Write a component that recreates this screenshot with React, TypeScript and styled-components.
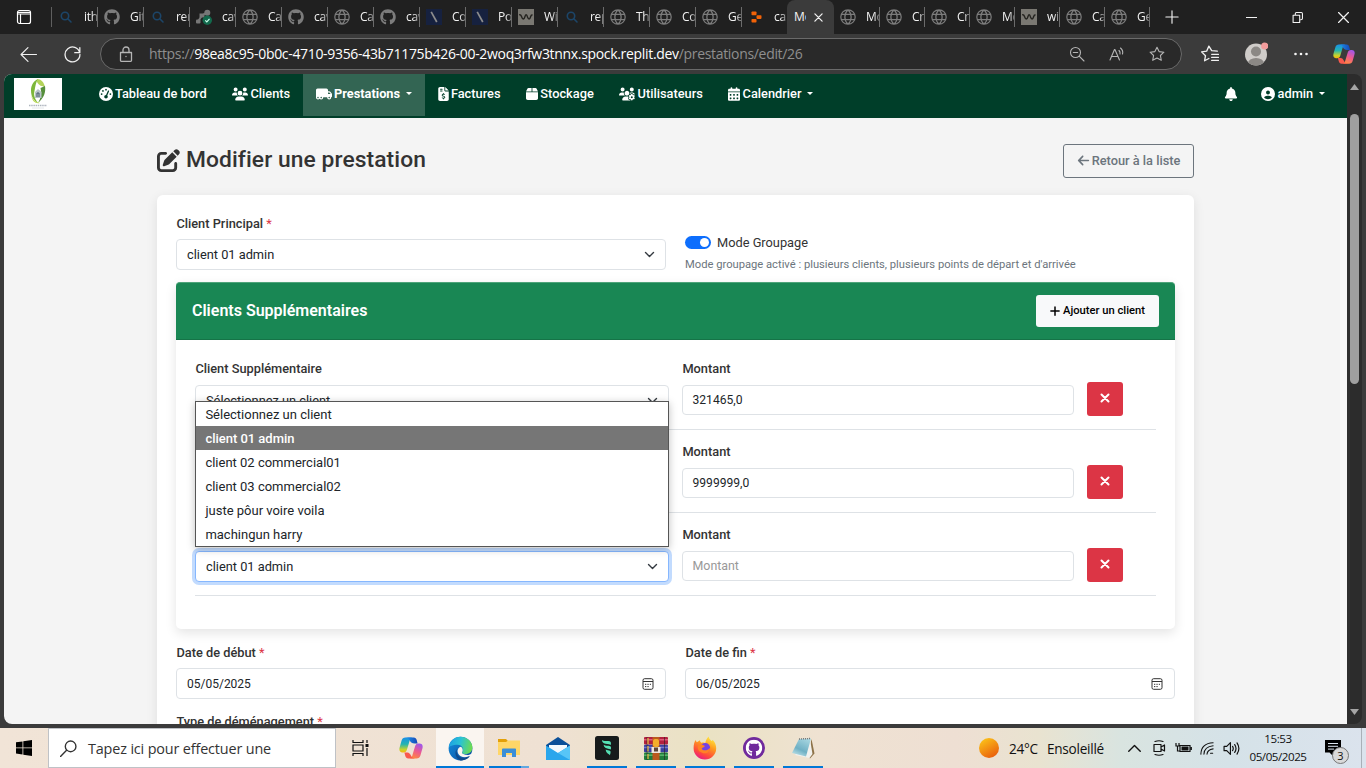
import React from "react";
import styled, { createGlobalStyle, css } from "styled-components";
import {
  FaGaugeHigh,
  FaUsers,
  FaTruckMoving,
  FaFileInvoiceDollar,
  FaBox,
  FaUsersGear,
  FaCalendarDays,
  FaBell,
  FaCircleUser,
  FaPenToSquare,
  FaArrowLeft,
  FaPlus,
  FaGithub,
} from "react-icons/fa6";

const GlobalStyle = createGlobalStyle`
  *, *::before, *::after { box-sizing: border-box; }
  body { margin: 0; background: #3b3b3b; overflow: hidden; }
  svg { display: block; flex: none; }
`;

const ui = `"Open Sans", "Noto Sans", sans-serif`;

const Desktop = styled.div`
  width: 1366px;
  height: 768px;
  display: flex;
  flex-direction: column;
  overflow: hidden;
  background: #3b3b3b;
  font-family: Roboto, sans-serif;
  color: #212529;
`;

/* ---------- browser chrome ---------- */

const TabStrip = styled.div`
  height: 34px;
  flex: none;
  display: flex;
  align-items: stretch;
  background: #202020;
  font: 12px/34px ${ui};
  color: #f2f2f2;
`;

const TabActions = styled.div`
  width: 52px;
  display: flex;
  align-items: center;
  padding-left: 16px;
  border-right: 1px solid transparent;
  background: linear-gradient(#5f5f5f, #5f5f5f) no-repeat 51px 7px / 1px 20px;
`;

const Tab = styled.div<{ $w: number; $line?: boolean }>`
  width: ${(p) => p.$w}px;
  flex: none;
  display: flex;
  align-items: center;
  padding-left: 6px;
  ${(p) =>
    p.$line !== false &&
    css`
      background: linear-gradient(#6b6b6b, #6b6b6b) no-repeat right 7px / 1px 20px;
    `}
`;

const TabIcon = styled.div`
  width: 16px;
  height: 16px;
  flex: none;
  margin-right: 10px;
  color: #7c7c7c;
`;

const TabTitle = styled.span`
  flex: 1;
  overflow: hidden;
  white-space: nowrap;
  letter-spacing: -0.3px;
  margin-right: 1px;
  mask-image: linear-gradient(90deg, #000 60%, rgba(0, 0, 0, 0.4));
`;

const ActiveTab = styled.div`
  width: 47px;
  flex: none;
  display: flex;
  align-items: center;
  justify-content: space-between;
  padding: 0 11px 0 7px;
  background: #3b3b3b;
  border-radius: 8px 8px 0 0;
`;

const ActiveTitle = styled.span`
  width: 12px;
  overflow: hidden;
  white-space: nowrap;
`;

const NewTab = styled.div`
  display: flex;
  align-items: center;
  margin-left: 15px;
`;

const WindowButtons = styled.div`
  margin-left: auto;
  display: flex;
  align-items: center;
  gap: 35px;
  padding-right: 17px;
`;

const Toolbar = styled.div`
  height: 40px;
  flex: none;
  display: flex;
  align-items: center;
  padding-left: 20px;
  color: #f0f0f0;
`;

const NavButtons = styled.div`
  width: 80px;
  flex: none;
  display: flex;
  gap: 27px;
`;

const AddressBar = styled.div`
  width: 1082px;
  height: 32px;
  flex: none;
  display: flex;
  align-items: center;
  border: 1px solid #6a6a6a;
  border-radius: 16px;
  background: #292929;
  padding: 0 16px 0 17px;
  color: #b5b5b5;
`;

const Url = styled.div`
  flex: 1;
  margin-left: 15px;
  white-space: nowrap;
  font: 14px/28px ${ui};
  letter-spacing: -0.32px;
  color: #8f8f8f;
`;

const Host = styled.span`
  color: #fff;
`;

const AddressTools = styled.div`
  display: flex;
  gap: 24px;
  align-items: center;
`;

const ToolbarEnd = styled.div`
  display: flex;
  align-items: center;
  gap: 25px;
  margin-left: 19px;
`;

const Viewport = styled.div`
  height: 650px;
  flex: none;
  margin: 0 4px 4px;
  display: flex;
  border-radius: 8px;
  overflow: hidden;
  background: #2c2c2c;
`;

const Page = styled.div`
  width: 1343px;
  height: 650px;
  overflow: hidden;
  background: #f4f4f4;
`;

const ScrollBar = styled.div`
  width: 15px;
  display: flex;
  flex-direction: column;
  align-items: center;
  padding: 10px 0 9px;
`;

const ScrollThumb = styled.div`
  width: 9px;
  height: 270px;
  margin: 24px 0 auto;
  border-radius: 5px;
  background: #9f9f9f;
`;

/* ---------- application navbar ---------- */

const Navbar = styled.nav`
  height: 44px;
  display: flex;
  align-items: flex-start;
  background: #003e29;
  color: #fff;
  padding-left: 10px;
`;

const Brand = styled.div`
  width: 48px;
  height: 32px;
  margin: 4px 24px 0 0;
  background: #fff;
`;

const NavItem = styled.a<{ $active?: boolean; $tight?: boolean }>`
  height: 42px;
  display: flex;
  align-items: center;
  padding: 0 ${(p) => (p.$tight ? 8 : 12.8)}px 3px 12.8px;
  font-size: 12.8px;
  font-weight: ${(p) => (p.$active ? 700 : 500)};
  white-space: nowrap;
  background: ${(p) => (p.$active ? "#336553" : "transparent")};
  svg {
    margin-right: 2.2px;
  }
`;

const AccountItem = styled(NavItem)`
  svg {
    margin-right: 3px;
  }
`;

const Caret = styled.span`
  margin-left: 6px;
  border: 3.8px solid transparent;
  border-top-color: currentColor;
  border-bottom: 0;
`;

const NavEnd = styled.div`
  display: flex;
  margin-left: auto;
  padding-right: 9px;
`;

/* ---------- page content ---------- */

const Container = styled.main`
  width: 1037px;
  margin-left: 153px;
  padding-top: 26px;
`;

const PageHead = styled.header`
  height: 34px;
  display: flex;
  justify-content: space-between;
  margin-bottom: 17px;
`;

const Title = styled.h1`
  margin: 0;
  display: flex;
  align-items: center;
  gap: 6px;
  height: 32px;
  font-size: 22.8px;
  font-weight: 500;
  line-height: 34px;
  color: #333;
  letter-spacing: 0.08px;
`;

const OutlineButton = styled.button`
  width: 131px;
  height: 34px;
  display: flex;
  align-items: center;
  justify-content: center;
  gap: 2px;
  padding: 0 0 1px;
  border: 1px solid #6c757d;
  border-radius: 3px;
  background: transparent;
  color: #6c757d;
  font: 500 12.8px Roboto, sans-serif;
  white-space: nowrap;
`;

const Card = styled.section`
  height: 620px;
  padding: 19px 19px 0;
  border-radius: 6px;
  background: #fff;
  box-shadow: 0 3px 12px rgba(0, 0, 0, 0.09);
`;

const TwoColumns = styled.div`
  height: 56px;
  display: grid;
  grid-template-columns: 490px 490px;
  column-gap: 19px;
`;

const Label = styled.label`
  display: block;
  height: 18px;
  padding-left: 0.4px;
  font-size: 12.8px;
  font-weight: 500;
  line-height: 20px;
  color: #333;
`;

const Required = styled.span`
  color: #dc3545;
  font-weight: 400;
`;

const Field = styled.div<{ $gap?: number; $h?: number; $focus?: boolean; $muted?: boolean; $small?: boolean }>`
  height: ${(p) => p.$h ?? 30}px;
  margin-top: ${(p) => p.$gap ?? 8}px;
  display: flex;
  align-items: center;
  justify-content: space-between;
  padding: 0 10px;
  border: 1px solid ${(p) => (p.$focus ? "#86b7fe" : "#dee2e6")};
  border-radius: 4px;
  background: #fff;
  font-size: ${(p) => (p.$small ? 12 : 12.8)}px;
  color: ${(p) => (p.$muted ? "#999" : "#212529")};
  ${(p) =>
    p.$focus &&
    css`
      box-shadow: 0 0 0 3px #c2dbfe;
    `}
`;

const AmountField = styled(Field)`
  padding: 0 9.5px ${(p) => (p.$muted ? 1 : 0)}px;
  font-size: ${(p) => (p.$muted ? 12.4 : 12.1)}px;
`;

const DateField = styled(Field)`
  padding-right: 11.5px;
`;

const ModeColumn = styled.div`
  padding-top: 18px;
`;

const SwitchRow = styled.div`
  display: flex;
  align-items: center;
  gap: 6px;
  height: 20px;
  font-size: 12.8px;
  color: #333;
`;

const Switch = styled.div`
  width: 26px;
  height: 13px;
  display: flex;
  justify-content: flex-end;
  align-items: center;
  padding: 2px;
  border-radius: 7px;
  background: #0d6efd;
  &::after {
    content: "";
    width: 9px;
    height: 9px;
    border-radius: 50%;
    background: #fff;
  }
`;

const Hint = styled.p`
  margin: 4px 0 0;
  font-size: 11.2px;
  line-height: 17px;
  color: #6c757d;
`;

const ClientsCard = styled.section`
  height: 347px;
  margin: 12px 0 14px;
  border-radius: 5px;
  background: #fff;
  box-shadow: 0 4px 12px rgba(0, 0, 0, 0.11);
`;

const ClientsHead = styled.header`
  height: 58px;
  display: flex;
  align-items: center;
  justify-content: space-between;
  padding: 0 16px;
  border-radius: 4px 4px 0 0;
  border-top: 1px solid #4ea47a;
  border-bottom: 1px solid #157347;
  background: #198754;
  color: #fff;
`;

const ClientsTitle = styled.h2`
  margin: 0 0 2px;
  font-size: 16px;
  font-weight: 600;
`;

const LightButton = styled.button`
  width: 123px;
  height: 32px;
  display: flex;
  align-items: center;
  justify-content: center;
  gap: 2px;
  padding: 0 1px 1px 0;
  border: 0;
  border-radius: 3px;
  background: #f8f9fa;
  color: #000;
  font: 500 11.2px Roboto, sans-serif;
  white-space: nowrap;
`;

const ClientsBody = styled.div`
  position: relative;
  padding: 19px 19px 0;
`;

const ClientRow = styled.div`
  height: 71px;
  margin-bottom: 12px;
  display: grid;
  grid-template-columns: 474px 392px 36px;
  column-gap: 13px;
  align-items: start;
  border-bottom: 1px solid #dee2e6;
`;

const DeleteButton = styled.button`
  width: 36px;
  height: 34px;
  margin-top: 23px;
  display: flex;
  align-items: center;
  justify-content: center;
  padding: 0 0 2px;
  border: 0;
  border-radius: 3px;
  background: #dc3545;
  color: #fff;
`;

const Dropdown = styled.ul`
  position: absolute;
  left: 19px;
  top: 61px;
  width: 474px;
  margin: 0;
  padding: 0;
  list-style: none;
  border: 1px solid #555;
  background: #fff;
  box-shadow: 0 2px 8px rgba(0, 0, 0, 0.25);
`;

const Option = styled.li<{ $selected?: boolean }>`
  height: 24px;
  padding-left: 9.4px;
  font-size: 13px;
  line-height: 25px;
  font-weight: ${(p) => (p.$selected ? 500 : 400)};
  letter-spacing: ${(p) => (p.$selected ? "-0.02px" : "0")};
  color: ${(p) => (p.$selected ? "#fff" : "#212529")};
  background: ${(p) => (p.$selected ? "#767676" : "#fff")};
`;

const LateLabel = styled(Label)`
  margin-top: 13px;
`;

/* ---------- taskbar ---------- */

const Taskbar = styled.footer`
  height: 40px;
  flex: none;
  display: flex;
  align-items: center;
  background: linear-gradient(90deg, #f1e4d7 0, #efe1d3 40%, #eae2c4 52%, #efe2d2 60%, #eedfd3 70%, #e9e3d0 76%, #d9e4e0 82%, #d5e2e8 90%, #dbe3ed 100%);
  color: #111;
  font-family: ${ui};
`;

const StartButton = styled.div`
  width: 48px;
  display: flex;
  justify-content: center;
`;

const SearchBox = styled.div`
  width: 288px;
  height: 40px;
  display: flex;
  align-items: center;
  gap: 11px;
  padding-left: 11px;
  border: 1px solid #bfc2c6;
  background: #fff;
  font-size: 14.4px;
  letter-spacing: -0.15px;
  color: #333;
  white-space: nowrap;
`;

const TaskItem = styled.div<{ $active?: boolean; $open?: boolean; $more?: boolean }>`
  width: ${(p) => (p.$active ? 48 : 40)}px;
  height: 40px;
  margin-right: ${(p) => (p.$active ? 5 : 9)}px;
  display: flex;
  align-items: center;
  justify-content: center;
  background: ${(p) => (p.$active ? "#faf5f0" : "transparent")};
  box-shadow: ${(p) =>
    p.$active || p.$open ? "inset 0 -2px #0078d7" : "none"};
  ${(p) =>
    p.$more &&
    css`
      background: linear-gradient(90deg, #0078d7 32px, #62a8e0 32px) no-repeat bottom / 100% 2px;
      box-shadow: none;
    `}
`;

const CopilotItem = styled(TaskItem)`
  margin: 0 5px 0 2px;
`;

const TaskApps = styled.div`
  display: flex;
  margin-left: 4px;
`;

const Weather = styled.div`
  display: flex;
  align-items: center;
  margin-left: 147px;
  width: 149px;
  font-size: 13.6px;
  letter-spacing: -0.25px;
  white-space: nowrap;
`;

const Degrees = styled.span`
  margin: 0 9px 0 10px;
`;

const Tray = styled.div`
  display: flex;
  align-items: center;
  width: 112px;
  justify-content: space-between;
`;

const Clock = styled.div`
  width: 62px;
  margin-left: 7px;
  text-align: center;
  font-size: 11.6px;
  line-height: 18px;
  letter-spacing: -0.45px;
`;

const Notifications = styled.div`
  position: relative;
  margin-left: 16px;
`;

const Badge = styled.span`
  position: absolute;
  left: 7px;
  top: 7px;
  width: 17px;
  height: 17px;
  border: 1px solid #777;
  border-radius: 50%;
  background: #d9d9d9;
  font-size: 11px;
  line-height: 15px;
  text-align: center;
`;

const ShowDesktop = styled.div`
  width: 5px;
  height: 40px;
  margin-left: auto;
  border-left: 1px solid #a9b0b8;
`;

/* ---------- drawings ---------- */

const Stroke = ({ size = 16, w = 1.2, d, vb = 16 }: { size?: number; w?: number; d: string; vb?: number }) => (
  <svg width={size} height={size} viewBox={`0 0 ${vb} ${vb}`} fill="none" stroke="currentColor" strokeWidth={w} strokeLinecap="round" strokeLinejoin="round">
    <path d={d} />
  </svg>
);

const GlobeIcon = () => (
  <Stroke d="M8 .8a7.2 7.2 0 1 0 0 14.4A7.2 7.2 0 1 0 8 .8M8 .8c-4.2 4-4.2 10.4 0 14.4M8 .8c4.2 4 4.2 10.4 0 14.4M1.5 5.4h13M1.5 10.6h13" />
);

const SearchTabIcon = () => (
  <svg width="16" height="16" viewBox="0 0 16 16" fill="none" stroke="#1c4568" strokeWidth="1.6" strokeLinecap="round">
    <circle cx="7" cy="7" r="3.7" />
    <path d="M9.8 9.8 13 13" />
  </svg>
);

const SlashIcon = () => (
  <svg width="16" height="16" viewBox="0 0 16 16">
    <rect width="16" height="16" fill="#16213f" />
    <path d="M5.2 2.8 10.8 13" stroke="#8d8d8d" strokeWidth="1.7" />
  </svg>
);

const WaveIcon = () => (
  <svg width="16" height="16" viewBox="0 0 16 16">
    <rect width="16" height="16" fill="#7a7872" />
    <path d="M1.200 5.800q1.600-.4 2.200 1.400Q4.300 10 5.300 10T7 7.500Q7.500 5.800 8.200 5.800T9.500 8q.7 2 1.600 2t1.500-2.200q.3-1.800 1.900-2" fill="none" stroke="#24231f" strokeWidth="1.400" />
  </svg>
);

const CheckNodeIcon = () => (
  <svg width="16" height="16" viewBox="0 0 16 16">
    <path d="M2 12.5 6 6.5l5-3" fill="none" stroke="#777" strokeWidth="2" />
    <circle cx="11.3" cy="3.800" r="3" fill="#777" />
    <rect x="0" y="10.500" width="4.500" height="4" rx="1" fill="#777" />
    <rect x="3.500" y="4.500" width="5" height="4" fill="#777" />
    <circle cx="11.300" cy="11.300" r="4.700" fill="#12694c" />
    <path d="m9.300 11.400 1.500 1.500 2.700-3" fill="none" stroke="#cfe" strokeWidth="1.200" />
  </svg>
);

const ReplitIcon = () => (
  <svg width="16" height="16" viewBox="0 0 16 16" fill="#f26207">
    <rect x="3.500" y="2.500" width="5" height="3.700" rx=".8" />
    <rect x="8.500" y="6.200" width="5" height="3.700" rx=".8" />
    <rect x="3.500" y="9.900" width="5" height="3.700" rx=".8" />
  </svg>
);

const CopilotIcon = ({ size, id }: { size: number; id: string }) => (
  <svg width={size} height={size} viewBox="0 0 24 24">
    <defs>
      <linearGradient id={`${id}a`} x1="0" y1="0" x2="0" y2="1">
        <stop offset="0" stopColor="#1a8fe8" />
        <stop offset=".45" stopColor="#25b5b0" />
        <stop offset=".8" stopColor="#c7d32c" />
        <stop offset="1" stopColor="#f5b70a" />
      </linearGradient>
      <linearGradient id={`${id}b`} x1=".7" y1="0" x2=".3" y2="1">
        <stop offset="0" stopColor="#a057ea" />
        <stop offset=".5" stopColor="#ee5a8e" />
        <stop offset="1" stopColor="#ff8a3c" />
      </linearGradient>
      <linearGradient id={`${id}c`}>
        <stop offset="0" stopColor="#1b96ee" />
        <stop offset="1" stopColor="#1746b5" />
      </linearGradient>
    </defs>
    <path d="M6.500 1.500h7c-2 .5-2.600 2-3.100 4L8 13.500c-.6 2-1.500 3-3.500 3H3.600C.8 16.500-.2 14.500.6 11.500l2-7C3.200 2.500 4.300 1.500 6.500 1.500Z" fill={`url(#${id}a)`} />
    <path d="M6.500 1.500h8.200c1.700 0 2.500.9 3 2.500l.9 3.500h-3c-2.600 0-3.600-1-4.600-2.500-.7-1.700-1.700-3.500-4.500-3.500Z" fill={`url(#${id}c)`} />
    <path d="M17.500 22.500h-7c2-.5 2.600-2 3.100-4l2.400-8c.6-2 1.500-3 3.500-3h.9c2.800 0 3.800 2 3 5l-2 7c-.6 2-1.700 3-3.900 3Z" fill={`url(#${id}b)`} />
    <path d="M17.500 22.500H9.300c-1.700 0-2.500-.9-3-2.500l-.9-3.500c3 0 4.500-.3 6 2 1 1.700 1.500 4 6.100 4Z" fill="#f9594e" />
  </svg>
);

const EdgeIcon = () => (
  <svg width="25" height="25" viewBox="0 0 24 24">
    <defs>
      <linearGradient id="edgeTop" x1="0" y1=".2" x2="1" y2=".4">
        <stop offset="0" stopColor="#1c9fe5" />
        <stop offset=".5" stopColor="#2bc3d2" />
        <stop offset="1" stopColor="#6bdb53" />
      </linearGradient>
      <linearGradient id="edgeLow" x1="0" y1="0" x2="1" y2="1">
        <stop offset="0" stopColor="#1490df" />
        <stop offset="1" stopColor="#0b4a9c" />
      </linearGradient>
    </defs>
    <circle cx="12" cy="12" r="11.400" fill="url(#edgeLow)" />
    <path d="M.8 11C1.500 5 6.200.6 12 .6c6.600 0 11.400 5 11.400 10.400 0 4-3 6.300-6.500 6.300-2.500 0-3.800-1-3.300-2 1.700-2.200.5-7-4.600-7C4.800 8.300 1.500 9.800.8 11Z" fill="url(#edgeTop)" />
    <path d="M12.400 10.300c-2.600.7-4 3.400-2.800 6.300 1.500 3.700 7 4.800 11.400 2.700 1-.4 1.300.1.900.7-1.200 1.600-4 3.100-6.300 3.300l7.900 1V16.500c-2 1.400-4.300 2-6.600 1.600-3.300-.6-4-1.900-3.200-3 .8-1.300.5-3.500-1.300-4.800Z" fill="#faf5f0" />
    <path d="M8.500 12.500c-1 3.500 1 8 5.500 8.500 3 .3 5-.5 7-1.700-2 3-5.500 4.400-9 4.100-5-2-6-8-3.500-10.900Z" fill="#114a8b" />
  </svg>
);

const FolderIcon = () => (
  <svg width="22" height="20" viewBox="0 0 22 20">
    <path d="M0 1h8l2 2h11v14H0z" fill="#e3a008" />
    <path d="M0 4h8l2-1.500h12V17H0z" fill="#ffd667" />
    <path d="M4 11.500C4 11 4.500 10.500 5 10.500h12c.6 0 1 .4 1 1V19h-4v-4H8v4H4z" fill="#3b8ed8" />
  </svg>
);

const MailIcon = () => (
  <svg width="24" height="23" viewBox="0 0 24 23">
    <path d="M0 8 12 0l12 8v4H0z" fill="#0a4f98" />
    <path d="M3 8h18v6l-9 4-9-4z" fill="#f3f8fc" />
    <path d="M0 8.500 12 16l12-7.500V23H0z" fill="#2aa6ec" />
    <path d="M12 16 24 8.500V23z" fill="#57c5f7" />
  </svg>
);

const LeafAppIcon = () => (
  <svg width="24" height="24" viewBox="0 0 24 24">
    <rect width="24" height="24" rx="2.500" fill="#171b1b" />
    <path d="M7 4c1.500 1.600 4.500.6 7.800 1.200 1 .4 1.500 2 .9 3.800-2-1.200-4.700-.6-6.800-1.700C7.500 6.500 6.900 5.200 7 4ZM8.700 8.800c2 1.200 4 .7 6.600 1.500.8.6 1 1.800.4 3.300-1.800-1.200-3.600-.8-5.400-1.900-1-.7-1.600-1.700-1.600-2.900ZM10.700 13.500c1.500.7 3 .7 4.600 1.500.5 1 .3 2.700-.5 4.300-.6-1.200-1.900-1.300-2.900-2.500-.8-.9-1.200-2.100-1.200-3.300Z" fill="#56e0b4" />
  </svg>
);

const ArchiveIcon = () => (
  <svg width="24" height="23" viewBox="0 0 24 23">
    <rect y="0" width="24" height="7.500" rx="1" fill="#b3203f" />
    <rect y="2" width="24" height="1.500" fill="#de5b78" />
    <rect y="7.700" width="24" height="7.500" rx="1" fill="#3b3f9e" />
    <rect y="9.700" width="24" height="1.500" fill="#7478cf" />
    <rect y="15.400" width="24" height="7.500" rx="1" fill="#1f7d3c" />
    <rect y="17.400" width="24" height="1.500" fill="#5ab86d" />
    <path d="M3 0v23M20.500 0v23" stroke="#2b2020" strokeWidth="1" opacity=".6" />
    <path d="M4 1v6M4 9v5.500M4 17v5" stroke="#e2b646" strokeWidth="1.300" />
    <rect x="8.500" width="7" height="23" fill="#bb5a1d" />
    <rect x="9" y="2" width="6" height="8" rx="2" fill="#f4ae2b" />
    <rect x="7.500" y="10" width="9" height="6" fill="#efe6dc" />
    <rect x="10" y="10.500" width="4" height="4" fill="#5d4637" />
  </svg>
);

const FirefoxIcon = () => (
  <svg width="24" height="24" viewBox="0 0 24 24">
    <defs>
      <linearGradient id="fox" x1=".8" y1="0" x2=".3" y2="1">
        <stop offset="0" stopColor="#fff044" />
        <stop offset=".4" stopColor="#ff9a1f" />
        <stop offset=".75" stopColor="#ff4a3c" />
        <stop offset="1" stopColor="#e6188c" />
      </linearGradient>
    </defs>
    <path d="M2.700 4c.2 1 .6 1.700 1.200 2.300L7 4.300c0 1.200.5 2 1.300 2.500 2-.6 3.200-.3 4 .2.500-2.500 1.800-5 3.400-6.400.2 2.200 1.500 3 2.800 4.300l1.300-.9c2.200 2.200 3.400 5 3.400 8.300A11.300 11.300 0 0 1 .6 12.300C.6 8.500 1.300 6 2.700 4Z" fill="url(#fox)" />
    <circle cx="12.300" cy="11.800" r="4.800" fill="#7542e5" />
    <path d="M5 9.500c2-1.500 4.500-1.200 7 .5-1 1.700-3 1.500-3.300 2.700 1.300 2.300 5.500 2.300 8.300-.7.500 4-4.500 6.900-8.300 4.500C5.300 15.500 4.300 12.500 5 9.500Z" fill="#ff8125" />
  </svg>
);

const GithubDesktopIcon = () => (
  <svg width="22" height="22" viewBox="0 0 22 22">
    <circle cx="11" cy="11" r="11" fill="#702a9d" />
    <FaGithub x={2.5} y={2.5} size={17} color="#fff" />
  </svg>
);

const NotepadIcon = () => (
  <svg width="24" height="24" viewBox="0 0 24 24">
    <defs>
      <linearGradient id="note" x1=".7" y1="0" x2=".2" y2="1">
        <stop offset="0" stopColor="#a4d4df" />
        <stop offset=".6" stopColor="#6fb0c4" />
        <stop offset="1" stopColor="#c4e6ec" />
      </linearGradient>
    </defs>
    <path d="m20.500 3 3 14.500-4.500 5L17 20z" fill="#8d7248" />
    <path d="m19 3 2.500 15-3 4L4 19z" fill="#f1f1ee" />
    <path d="M8 3 20 2.500 15 20.500 1 17z" fill="url(#note)" />
    <path d="M8 3 20 2.500" stroke="#777" strokeWidth="1.500" strokeDasharray="1 1" />
  </svg>
);

const LogoDrawing = () => (
  <svg width="48" height="32" viewBox="0 0 48 32">
    <path d="M24 1c-4 1.500-7 6-7 11 0 6 2 10 7 13-3.500-4.500-4.500-8-3.500-12C21.200 8.500 22 4 24 1Z" fill="#7db73a" />
    <path d="M23 1c4 0 7 3 8 8-3-1-6-1-8-5z" fill="#b3d25a" />
    <path d="M31 8c1 6-1 12-7 17 3-5 4-10 2.500-15z" fill="#568f3c" />
    <path d="M17 16c1 5 4 8 9 9-4 1-8-1-9-9Z" fill="#b8d853" />
    <path d="m21 14 3-3 3.500 3v6H21z" fill="#b8c4c8" />
    <path d="M23 19v-4h2v4" fill="none" stroke="#44596a" />
    <path d="M15 27.500h18" stroke="#7a8494" strokeWidth="1.500" strokeDasharray="1.500 .7" opacity=".6" />
    <path d="M18 30h12" stroke="#e3e6ea" />
  </svg>
);

const Chevron = () => (
  <svg width="11" height="11" viewBox="0 0 11 11" fill="none" stroke="#343a40" strokeWidth="1.400" strokeLinecap="round" strokeLinejoin="round">
    <path d="m1.500 3.500 4 4 4-4" />
  </svg>
);

const CrossIcon = () => (
  <svg width="10" height="10" viewBox="0 0 10 10" fill="none" stroke="#fff" strokeWidth="2" strokeLinecap="round">
    <path d="m1.500 1.500 7 7M8.500 1.500l-7 7" />
  </svg>
);

const DateIcon = () => (
  <svg width="12" height="12" viewBox="0 0 12 12" fill="none" stroke="#333">
    <rect x="1" y=".7" width="10" height="10.600" rx="1.600" />
    <path d="M1 3.500h10M3 6.300h1.300M5.400 6.300h1.300M7.800 6.300H9M3 8.600h1.300M5.400 8.600h1.300" />
  </svg>
);

const GithubTab = () => <FaGithub size={16} />;

const leftTabs: [React.FC, string][] = [
  [SearchTabIcon, "ith"],
  [GithubTab, "Git"],
  [SearchTabIcon, "ren"],
  [CheckNodeIcon, "cav"],
  [GlobeIcon, "Cav"],
  [GithubTab, "cav"],
  [GlobeIcon, "Cav"],
  [GithubTab, "cav"],
  [SlashIcon, "Con"],
  [SlashIcon, "Pos"],
  [WaveIcon, "Win"],
  [SearchTabIcon, "rep"],
  [GlobeIcon, "The"],
  [GlobeIcon, "Con"],
  [GlobeIcon, "Ges"],
  [ReplitIcon, "cav"],
];

const rightTabs: [React.FC, string][] = [
  [GlobeIcon, "Mo"],
  [GlobeIcon, "Cre"],
  [GlobeIcon, "Cre"],
  [GlobeIcon, "Mo"],
  [WaveIcon, "win"],
  [GlobeIcon, "Cal"],
  [GlobeIcon, "Ges"],
];

const options = [
  "Sélectionnez un client",
  "client 01 admin",
  "client 02 commercial01",
  "client 03 commercial02",
  "juste pôur voire voila",
  "machingun harry",
];

const clients = [
  { client: "Sélectionnez un client", amount: "321465,0" },
  { client: "", amount: "9999999,0" },
  { client: "client 01 admin", amount: "" },
];

const star = "M8 1.200l2.100 4.400 4.800.6-3.500 3.300.9 4.800L8 12l-4.300 2.300.9-4.800L1.100 6.200l4.800-.6z";

const BrowserChrome = () => (
  <>
    <TabStrip>
      <TabActions>
        <svg width="16" height="16" viewBox="0 0 16 16" fill="none" stroke="#fff" strokeWidth="1.200">
          <rect x="1.500" y="1.500" width="13" height="13" rx="2" />
          <path d="M1.500 5h13M4.500 5v9.500M2 3.300h12" />
        </svg>
      </TabActions>
      {leftTabs.map(([Icon, title], i) => (
        <Tab key={i} $w={i === 15 ? 45 : 46} $line={i !== 15}>
          <TabIcon><Icon /></TabIcon>
          <TabTitle>{title}</TabTitle>
        </Tab>
      ))}
      <ActiveTab>
        <ActiveTitle>Mo</ActiveTitle>
        <Stroke size={9} vb={10} w={1.4} d="M1 1l8 8M9 1l-8 8" />
      </ActiveTab>
      {rightTabs.map(([Icon, title], i) => (
        <Tab key={i} $w={i === 0 ? 46 : 45}>
          <TabIcon><Icon /></TabIcon>
          <TabTitle>{title}</TabTitle>
        </Tab>
      ))}
      <NewTab><Stroke size={14} w={1.3} d="M8 1v14M1 8h14" /></NewTab>
      <WindowButtons>
        <Stroke size={11} vb={10} w={1} d="M0 5h10" />
        <Stroke size={11} vb={10} w={1} d="M1 3h6v6.500H1zM3 2.500V1.500q0-1 1-1h4.500q1 0 1 1V6q0 1-1.500 1" />
        <Stroke size={11} vb={10} w={1.1} d="M.5.500l9 9M9.500.500l-9 9" />
      </WindowButtons>
    </TabStrip>
    <Toolbar>
      <NavButtons>
        <Stroke size={17} d="M15.500 8H1M7.500 1.500 1 8l6.500 6.500" w={1.1} />
        <Stroke size={17} d="M14.800 6.300A7 7 0 1 0 15 8M14.900 1.500v4.800h-4.800" w={1.2} />
      </NavButtons>
      <AddressBar>
        <Stroke size={16} w={1.3} d="M2.500 6.500h11v8q0 .8-.8.800H3.300q-.8 0-.8-.8zM5 6.500V4a3 3 0 0 1 6 0v2.500M8 10.400v.2" />
        <Url>https://<Host>98ea8c95-0b0c-4710-9356-43b71175b426-00-2woq3rfw3tnnx.spock.replit.dev</Host>/prestations/edit/26</Url>
        <AddressTools>
          <Stroke d="M6.500 1.500a5 5 0 1 0 0 10 5 5 0 1 0 0-10M10.200 10.200 15 15M4.300 6.500h4.400" w={1.1} />
          <Stroke d="M1 14 5.500 3.500h.4L10.500 14M2.700 10.500h6M10 4.500q1.500 1.500 1 3.500M11.500 2q3 2.500 2 6" w={1.1} />
          <Stroke d={star} w={1.1} />
        </AddressTools>
      </AddressBar>
      <ToolbarEnd>
        <Stroke size={18} d="M14.500 5.500 9.500 5 7 1 5 5.500l-4.500.6L4 9.500 3.200 14 7 12M9.500 8.300h6M9.500 11h6M9.500 13.700h6" w={1.2} />
        <svg width="24" height="24" viewBox="0 0 24 24">
          <clipPath id="face"><circle cx="12" cy="12.500" r="11" /></clipPath>
          <g clipPath="url(#face)">
            <rect width="24" height="24" fill="#cfccc9" />
            <circle cx="12" cy="9.500" r="5" fill="#8b8885" />
            <ellipse cx="12" cy="21.500" rx="8" ry="5.500" fill="#8b8885" />
          </g>
          <circle cx="20.700" cy="4" r="3.600" fill="#f29c9c" />
        </svg>
        <svg width="15" height="4" viewBox="0 0 15 4" fill="#f5f5f5">
          <circle cx="2.500" cy="2" r="1.300" /><circle cx="8" cy="2" r="1.300" /><circle cx="13.500" cy="2" r="1.300" />
        </svg>
        <CopilotIcon size={22} id="bar" />
      </ToolbarEnd>
    </Toolbar>
  </>
);

const AppPage = () => (
  <Page>
    <Navbar>
      <Brand><LogoDrawing /></Brand>
      <NavItem><FaGaugeHigh size={14} />Tableau de bord</NavItem>
      <NavItem><FaUsers size={16} />Clients</NavItem>
      <NavItem $active><FaTruckMoving size={16} />Prestations<Caret /></NavItem>
      <NavItem><FaFileInvoiceDollar size={14} style={{ width: 11 }} />Factures</NavItem>
      <NavItem><FaBox size={14} style={{ width: 12 }} />Stockage</NavItem>
      <NavItem><FaUsersGear size={16} />Utilisateurs</NavItem>
      <NavItem><FaCalendarDays size={14} style={{ width: 12 }} />Calendrier<Caret /></NavItem>
      <NavEnd>
        <NavItem $tight><FaBell size={14} /></NavItem>
        <AccountItem><FaCircleUser size={14} />admin<Caret /></AccountItem>
      </NavEnd>
    </Navbar>
    <Container>
      <PageHead>
        <Title><FaPenToSquare size={23} />Modifier une prestation</Title>
        <OutlineButton><FaArrowLeft size={13} />Retour à la liste</OutlineButton>
      </PageHead>
      <Card>
        <TwoColumns>
          <div>
            <Label>Client Principal <Required>*</Required></Label>
            <Field $gap={7} $h={31}>client 01 admin<Chevron /></Field>
          </div>
          <ModeColumn>
            <SwitchRow><Switch />Mode Groupage</SwitchRow>
            <Hint>Mode groupage activé : plusieurs clients, plusieurs points de départ et d'arrivée</Hint>
          </ModeColumn>
        </TwoColumns>
        <ClientsCard>
          <ClientsHead>
            <ClientsTitle>Clients Supplémentaires</ClientsTitle>
            <LightButton><FaPlus size={12} />Ajouter un client</LightButton>
          </ClientsHead>
          <ClientsBody>
            {clients.map((row, i) => (
              <ClientRow key={i}>
                <div>
                  <Label>{i === 0 && "Client Supplémentaire"}</Label>
                  <Field $focus={i === 2} $h={i === 2 ? 31 : 30}>{row.client}<Chevron /></Field>
                </div>
                <div>
                  <Label>Montant</Label>
                  <AmountField $muted={!row.amount}>{row.amount || "Montant"}</AmountField>
                </div>
                <DeleteButton><CrossIcon /></DeleteButton>
              </ClientRow>
            ))}
            <Dropdown>
              {options.map((name, i) => (
                <Option key={name} $selected={i === 1}>{name}</Option>
              ))}
            </Dropdown>
          </ClientsBody>
        </ClientsCard>
        <TwoColumns>
          <div>
            <Label>Date de début <Required>*</Required></Label>
            <DateField $gap={7} $h={31} $small>05/05/2025<DateIcon /></DateField>
          </div>
          <div>
            <Label>Date de fin <Required>*</Required></Label>
            <DateField $gap={7} $h={31} $small>06/05/2025<DateIcon /></DateField>
          </div>
        </TwoColumns>
        <LateLabel>Type de déménagement <Required>*</Required></LateLabel>
      </Card>
    </Container>
  </Page>
);

const SystemTaskbar = () => (
  <Taskbar>
    <StartButton>
      <svg width="16" height="16" viewBox="0 0 16 16"><path d="M0 2.300 6.500 1.400v6.100H0zM7.300 1.300 16 0v7.500H7.300zM0 8.300h6.500v6.200L0 13.600zM7.300 8.300H16V16l-8.700-1.300z" /></svg>
    </StartButton>
    <SearchBox>
      <Stroke size={17} w={1.3} d="M10 1a5 5 0 1 0 0 10 5 5 0 1 0 0-10M6.400 9.500.500 15.500" />
      Tapez ici pour effectuer une
    </SearchBox>
    <TaskApps>
      <TaskItem>
        <svg width="17" height="16" viewBox="0 0 17 16" fill="none" stroke="#111" strokeWidth="1.200">
          <path d="M1 0v2.500h10V0M1 5h10v6H1zM1 16v-2.500h10V16M15 0v3M15 8v8" /><path d="M13.500 5.500h3" strokeWidth="3" />
        </svg>
      </TaskItem>
      <CopilotItem><CopilotIcon size={24} id="task" /></CopilotItem>
      <TaskItem $active><EdgeIcon /></TaskItem>
      <TaskItem $more><FolderIcon /></TaskItem>
      <TaskItem><MailIcon /></TaskItem>
      <TaskItem $open><LeafAppIcon /></TaskItem>
      <TaskItem $open><ArchiveIcon /></TaskItem>
      <TaskItem $open><FirefoxIcon /></TaskItem>
      <TaskItem $open><GithubDesktopIcon /></TaskItem>
      <TaskItem $open><NotepadIcon /></TaskItem>
    </TaskApps>
    <Weather>
      <svg width="20" height="20" viewBox="0 0 20 20">
        <defs><linearGradient id="sun" x1=".2" y1="0" x2=".8" y2="1"><stop offset="0" stopColor="#fcc419" /><stop offset="1" stopColor="#e8590c" /></linearGradient></defs>
        <circle cx="10" cy="10" r="10" fill="url(#sun)" />
      </svg>
      <Degrees>24°C</Degrees>Ensoleillé
    </Weather>
    <Tray>
      <Stroke size={13} vb={12} w={1.3} d="M.7 8.500 6 3.200l5.300 5.300" />
      <Stroke size={16} w={1.2} d="M5 1.500q4-1.500 8 0M5 14.500q4 1.500 8 0M4 4.500h7v7H4zM11 7l3.500-2v6L11 9" />
      <svg width="17" height="12" viewBox="0 0 17 12" fill="none" stroke="#111" strokeWidth="1.200">
        <path d="M5 3.500h10v6H5zM16.300 5v3M1 1v3h3V1M2.500 4v5H5" /><path d="M6.500 6.500h7" strokeWidth="4" />
      </svg>
      <Stroke size={14} w={1.2} d="M1 15Q1.500 2.500 15 2M4.500 15Q5 6.500 15 5.500M8 15Q8.500 10 15 9M12 14h2.500" />
      <Stroke size={17} w={1.1} d="M1 6h2.500L7 2.500v11L3.500 10H1zM9 6q1.300 2 0 4M11 4.300q2.500 3.700 0 7.400M13.200 2.700q3.500 5.300 0 10.600" />
    </Tray>
    <Clock>15:53<br />05/05/2025</Clock>
    <Notifications>
      <svg width="16" height="16" viewBox="0 0 16 16"><path d="M0 0h16v12.500H8V16l-3.500-3.500H0z" /><path d="M3 3.500h10M3 6.300h10M3 9.100h6" stroke="#dbe3ed" /></svg>
      <Badge>3</Badge>
    </Notifications>
    <ShowDesktop />
  </Taskbar>
);

export default function App() {
  return (
    <Desktop>
      <GlobalStyle />
      <BrowserChrome />
      <Viewport>
        <AppPage />
        <ScrollBar>
          <svg width="9" height="6" viewBox="0 0 9 6"><path d="M0 6 4.500 0 9 6z" fill="#a5a5a5" /></svg>
          <ScrollThumb />
          <svg width="9" height="6" viewBox="0 0 9 6"><path d="M0 0h9L4.500 6z" fill="#a5a5a5" /></svg>
        </ScrollBar>
      </Viewport>
      <SystemTaskbar />
    </Desktop>
  );
}
